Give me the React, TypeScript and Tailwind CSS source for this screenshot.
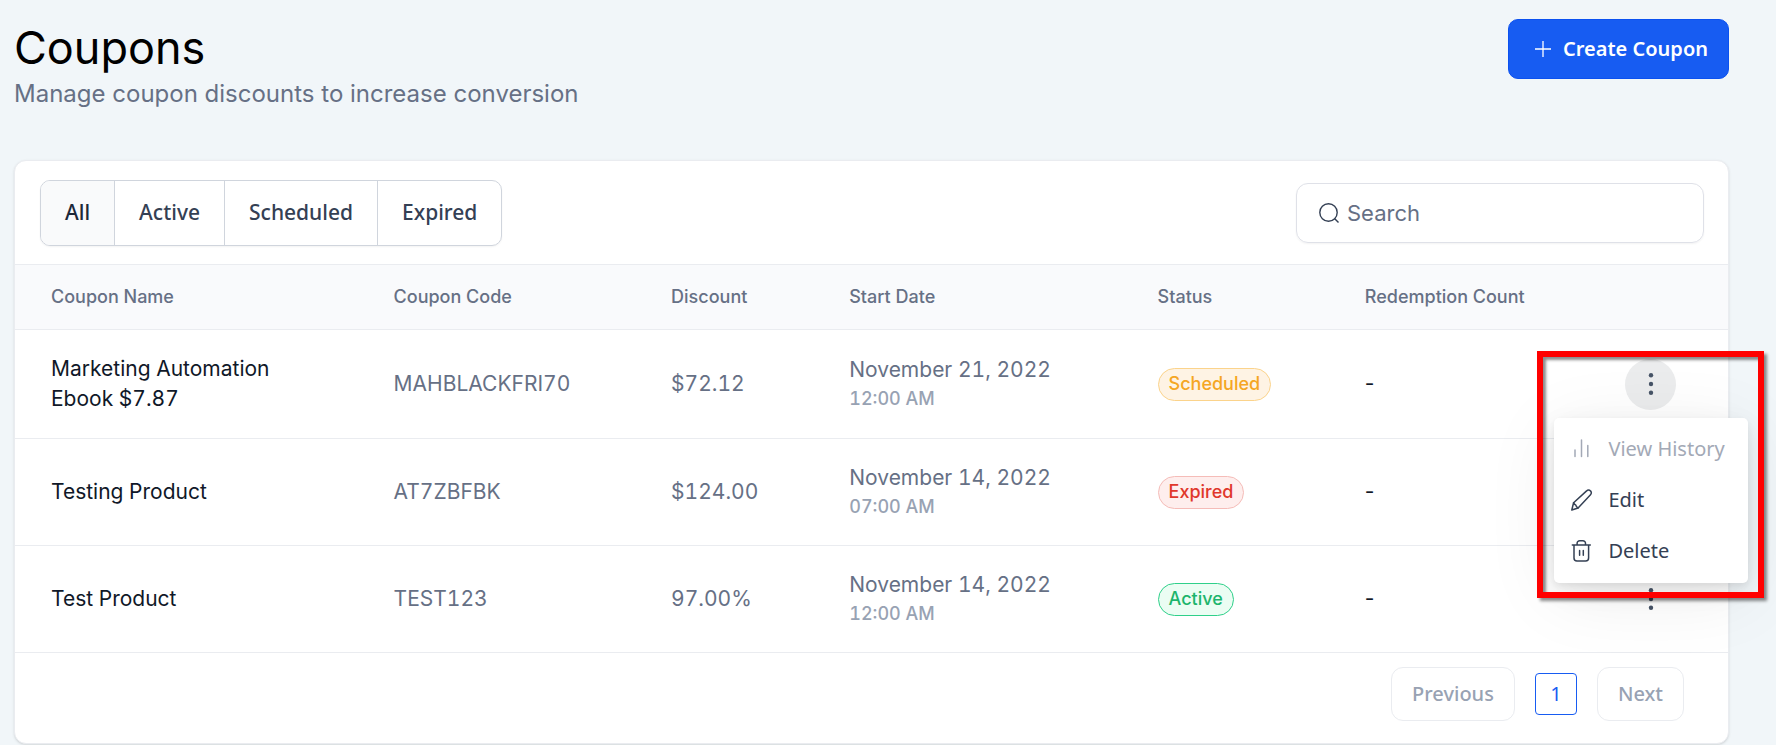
import { useState } from "react";
import type { ReactNode } from "react";

type Status = "Scheduled" | "Expired" | "Active";

interface Coupon {
  name: string;
  code: string;
  discount: string;
  date: string;
  time: string;
  status: Status;
  redemptions: string;
}

const coupons: Coupon[] = [
  { name: "Marketing Automation Ebook $7.87", code: "MAHBLACKFRI70", discount: "$72.12", date: "November 21, 2022", time: "12:00 AM", status: "Scheduled", redemptions: "-" },
  { name: "Testing Product", code: "AT7ZBFBK", discount: "$124.00", date: "November 14, 2022", time: "07:00 AM", status: "Expired", redemptions: "-" },
  { name: "Test Product", code: "TEST123", discount: "97.00%", date: "November 14, 2022", time: "12:00 AM", status: "Active", redemptions: "-" },
];

const tabs = ["All", "Active", "Scheduled", "Expired"];

const badgeStyles: Record<Status, string> = {
  Scheduled: "border-[#fbd38b] bg-[#fef3e4] text-[#f5a623]",
  Expired: "border-[#f5bcb8] bg-[#feeeed] text-[#e0372b]",
  Active: "border-[#2fd08a] bg-[#ebfdf3] text-[#1db56c]",
};

function Badge({ status }: { status: Status }) {
  return (
    <span className={`inline-flex h-[33px] items-center rounded-full border px-[10px] align-middle text-lg font-medium ${badgeStyles[status]}`}>
      {status}
    </span>
  );
}

function DotsIcon() {
  return (
    <svg width="6" height="26" viewBox="0 0 6 26" fill="#475467" aria-hidden="true">
      <circle cx="3" cy="4.2" r="2.2" />
      <circle cx="3" cy="13" r="2.2" />
      <circle cx="3" cy="21.800" r="2.2" />
    </svg>
  );
}

function BarsIcon() {
  return (
    <svg width="24" height="24" viewBox="0 0 24 24" fill="none" stroke="currentColor" strokeWidth="1.5" strokeLinecap="round" aria-hidden="true">
      <path d="M5 13v6.500M11.500 3v16.500M17.800 8.500v11" />
    </svg>
  );
}

function PencilIcon() {
  return (
    <svg width="24" height="24" viewBox="0 0 24 24" fill="none" stroke="currentColor" strokeWidth="1.5" strokeLinecap="round" strokeLinejoin="round" aria-hidden="true">
      <path d="M1.800 22l1.800-7.200L16.600 2.900a2.700 2.700 0 0 1 3.900 0 2.700 2.700 0 0 1 0 3.900L8.100 20z" />
      <path d="M3.600 14.800c.4 1.400 1 1.900 2.100 2.100.3 1.500 1 2.300 2.400 3.100" />
    </svg>
  );
}

function TrashIcon() {
  return (
    <svg width="24" height="24" viewBox="0 0 24 24" fill="none" stroke="currentColor" strokeWidth="1.5" strokeLinecap="round" strokeLinejoin="round" aria-hidden="true">
      <path d="M2.300 6h18M4 6v13a3 3 0 0 0 3 3h8.600a3 3 0 0 0 3-3V6M7.100 6V4.400a2.600 2.600 0 0 1 2.600-2.600h3.200a2.600 2.600 0 0 1 2.600 2.600V6M9.600 11.500v4.700M13.300 11.500v4.700" />
    </svg>
  );
}

function MenuItem({ icon, label, disabled }: { icon: ReactNode; label: string; disabled?: boolean }) {
  return (
    <button
      type="button"
      role="menuitem"
      disabled={disabled}
      className="flex h-[51px] w-full items-center gap-[14px] pl-4 text-left font-['Noto_Sans',sans-serif] text-xl whitespace-nowrap text-[#344054] disabled:text-[#a3a9b6]"
    >
      {icon}
      {label}
    </button>
  );
}

export default function App() {
  const [tab, setTab] = useState("All");
  const [openRow, setOpenRow] = useState<number | null>(0);

  return (
    <main className="min-h-screen bg-[#f1f6f9] pt-[19px] pr-[47px] pb-[2px] pl-[14px] font-['Inter',sans-serif] text-[#101828]">
      <header className="flex items-start justify-between">
        <div>
          <h1 className="text-[45px] leading-[58px] text-black">Coupons</h1>
          <p className="text-2xl leading-[34px] text-[#667085]">Manage coupon discounts to increase conversion</p>
        </div>
        <button type="button" className="flex h-[60px] items-center gap-3 rounded-[10px] border border-[#0b51f0] bg-[#175cf2] pr-5 pl-[26px] font-['Noto_Sans',sans-serif] text-xl font-semibold text-white">
          <svg width="16" height="16" viewBox="0 0 16 16" stroke="currentColor" strokeWidth="1.3" aria-hidden="true">
            <path d="M8 0v16M0 8h16" />
          </svg>
          Create Coupon
        </button>
      </header>

      <section className="mt-[49px] rounded-xl border border-[#eaecf0] bg-white shadow-sm">
        <div className="flex items-center justify-between px-6 pt-[19px] pb-[18px] pl-[25px]">
          <div className="flex rounded-[10px] border border-[#d0d5dd] font-['Noto_Sans',sans-serif] shadow-xs">
            {tabs.map((t) => (
              <button
                key={t}
                type="button"
                aria-pressed={tab === t}
                onClick={() => setTab(t)}
                className="h-16 border-r border-[#d0d5dd] px-6 text-[21px] font-medium text-[#344054] first:rounded-l-[9px] last:rounded-r-[9px] last:border-r-0 aria-pressed:bg-[#f9fafb] aria-pressed:text-[#1d2939]"
              >
                {t}
              </button>
            ))}
          </div>
          <label className="flex h-[60px] w-[408px] items-center gap-2 rounded-xl border border-[#dfe1e8] pr-4 pl-[22px] shadow-xs">
            <svg width="20" height="20" viewBox="0 0 20 20" fill="none" stroke="#344054" strokeWidth="1.4" aria-hidden="true">
              <circle cx="9.500" cy="9.500" r="8.700" />
              <path d="M15.500 15.500L19.500 19.500" />
            </svg>
            <input type="text" aria-label="Search" placeholder="Search" className="min-w-0 flex-1 bg-transparent text-[22px] outline-none placeholder:text-[#667085]" />
          </label>
        </div>

        <table className="w-full table-fixed text-left">
          <thead className="border-y border-[#eaecf0] bg-[#f9fafc]">
            <tr className="h-[65px] text-lg text-[#667085] [&>th]:pl-9 [&>th]:font-medium">
              <th className="w-[20%]">Coupon Name</th>
              <th className="w-[16.2%]">Coupon Code</th>
              <th className="w-[10.4%]">Discount</th>
              <th className="w-[18%]">Start Date</th>
              <th className="w-[12.1%]">Status</th>
              <th>Redemption Count</th>
              <th className="w-[9%]" aria-label="Actions" />
            </tr>
          </thead>
          <tbody>
            {coupons.map((c, i) => (
              <tr key={c.code} className="border-b border-[#eaecf0] text-[21px] leading-[30px] text-[#667085] [&>td]:py-6 [&>td]:pl-9">
                <td className="text-[#101828] tabular-nums">
                  <div className="max-w-[250px]">{c.name}</div>
                </td>
                <td className="tabular-nums">{c.code}</td>
                <td className="tabular-nums">{c.discount}</td>
                <td className="tabular-nums">
                  <div>{c.date}</div>
                  <div className="text-lg leading-[28px] font-medium text-[#98a2b3]">{c.time}</div>
                </td>
                <td>
                  <Badge status={c.status} />
                </td>
                <td className="text-[#101828]">{c.redemptions}</td>
                <td className="!pl-0">
                  <div className="relative mx-auto size-[51px]">
                    <button
                      type="button"
                      aria-label={`Actions for ${c.name}`}
                      aria-expanded={openRow === i}
                      onClick={() => setOpenRow(openRow === i ? null : i)}
                      className="flex size-full items-center justify-center rounded-full aria-expanded:bg-[#ebeced]"
                    >
                      <DotsIcon />
                    </button>
                    {openRow === i && (
                      <>
                        <div role="menu" className="absolute top-[59px] -right-[72px] z-10 w-[194px] rounded-[5px] bg-white py-[6px] shadow-[0_3px_6px_rgba(0,0,0,0.06),0_8px_24px_rgba(0,0,0,0.08),0_12px_72px_rgba(0,0,0,0.08)]">
                          <MenuItem icon={<BarsIcon />} label="View History" disabled />
                          <MenuItem icon={<PencilIcon />} label="Edit" />
                          <MenuItem icon={<TrashIcon />} label="Delete" />
                        </div>
                        <div className="pointer-events-none absolute -top-2 -right-[88px] z-20 h-[247px] w-[227px] border-[6px] border-[#ff0000] shadow-[3px_3px_3px_rgba(0,0,0,0.45),inset_3px_3px_3px_rgba(0,0,0,0.45)]" />
                      </>
                    )}
                  </div>
                </td>
              </tr>
            ))}
          </tbody>
        </table>

        <nav aria-label="Pagination" className="flex items-center justify-end gap-5 pt-[14px] pr-11 pb-[22px] font-['Noto_Sans',sans-serif] text-xl font-medium text-[#98a2b3]">
          <button type="button" disabled className="h-[54px] rounded-xl border border-[#eaecf0] px-5">Previous</button>
          <button type="button" aria-current="page" className="size-[42px] rounded-[4px] border border-[#175cf2] font-normal text-[#175cf2]">1</button>
          <button type="button" disabled className="h-[54px] rounded-xl border border-[#eaecf0] px-5">Next</button>
        </nav>
      </section>
    </main>
  );
}
